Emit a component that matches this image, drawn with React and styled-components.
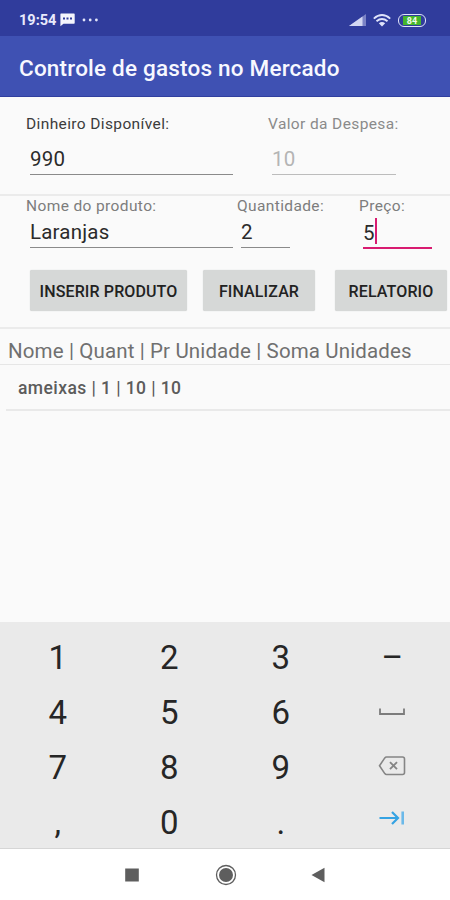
import styled, { createGlobalStyle } from "styled-components";
import React from "react";

const keys = ["1", "2", "3", "–", "4", "5", "6", "space", "7", "8", "9", "delete", ",", "0", ".", "next"];

export default function App() {
  return (
    <Screen>
      <GlobalStyle />
      <StatusBar>
        <Clock>19:54</Clock>
        <MessageIcon />
        <DotsIcon />
        <StatusRight>
          <SignalIcon />
          <WifiIcon />
          <BatteryIcon />
        </StatusRight>
      </StatusBar>
      <AppBar>
        <Title>Controle de gastos no Mercado</Title>
      </AppBar>
      <Balance>
        <Field $width={207}>
          <Label $color="#3c3c3c">Dinheiro Disponível:</Label>
          <Value $gap={19}>990</Value>
        </Field>
        <Field $width={128} $left={35}>
          <Label $color="#8a8a8a">Valor da Despesa:</Label>
          <Value $gap={19} $color="#b4b4b4" $line="#bcbcbc">10</Value>
        </Field>
      </Balance>
      <Product>
        <Field $width={207}>
          <Label>Nome do produto:</Label>
          <Value $gap={10}>Laranjas</Value>
        </Field>
        <Field $width={53} $left={4}>
          <Label>Quantidade:</Label>
          <Value $gap={10}>2</Value>
        </Field>
        <Field $width={73} $left={69}>
          <Label>Preço:</Label>
          <Value $gap={10} $focus>
            5<Caret />
          </Value>
        </Field>
      </Product>
      <Actions>
        <Button $width={157}>INSERIR PRODUTO</Button>
        <Button $width={112} $left={16}>FINALIZAR</Button>
        <Button $width={112} $left={20}>RELATORIO</Button>
      </Actions>
      <ListHeader>Nome | Quant | Pr Unidade | Soma Unidades</ListHeader>
      <ListItem>ameixas | 1 | 10 | 10</ListItem>
      <Empty />
      <Keyboard>
        {keys.map((key) => (
          <Key key={key}>
            <KeyFace name={key} />
          </Key>
        ))}
      </Keyboard>
      <NavBar />
    </Screen>
  );
}

function KeyFace({ name }) {
  if (name === "space") {
    return (
      <svg width="26" height="9" viewBox="0 0 26 9" fill="none" stroke="#7c7c7c" strokeWidth="1.8">
        <path d="M1 0.500V6H25V0.500" />
      </svg>
    );
  }
  if (name === "delete") {
    return (
      <DeleteIcon width="28" height="20" viewBox="0 0 28 20" fill="none" stroke="#858585" strokeWidth="1.6">
        <path d="M8.500 1H24.500Q26.500 1 26.500 3V16.500Q26.500 18.500 24.500 18.500H8.500Q7.500 18.500 6.800 17.600L1.500 9.750L6.800 1.900Q7.500 1 8.500 1Z" />
        <path d="M12 6.200L19 13.200M19 6.200L12 13.200" strokeWidth="1.9" />
      </DeleteIcon>
    );
  }
  if (name === "next") {
    return (
      <NextIcon width="26" height="14" viewBox="0 0 26 14" fill="none" stroke="#35a3e3" strokeWidth="2.2">
        <path d="M0.500 7H19M13 1L19 7L13 13" />
        <path d="M23.700 0.500V13.500" strokeWidth="2.600" stroke="#6bb9e9" />
      </NextIcon>
    );
  }
  return <span>{name}</span>;
}

function MessageIcon() {
  return (
    <svg width="15" height="14" viewBox="0 0 15 14">
      <path d="M1 0.500H14Q14.700 0.500 14.700 1.200V10Q14.700 10.800 14 10.800H3.500L0.400 13.300V1.200Q0.400 0.500 1 0.500Z" fill="#f4f5fd" />
      <path d="M3 4.500h2v2H3zM6.500 4.500h2v2h-2zM10 4.500h2v2h-2z" fill="#303c9c" />
    </svg>
  );
}

function DotsIcon() {
  return (
    <Dots width="17" height="4" viewBox="0 0 17 4" fill="#e2e5fa">
      <circle cx="2" cy="2" r="1.400" />
      <circle cx="8.200" cy="2" r="1.400" />
      <circle cx="14.400" cy="2" r="1.400" />
    </Dots>
  );
}

function SignalIcon() {
  return (
    <svg width="17" height="12" viewBox="0 0 17 12">
      <path d="M0 12L17 0V12Z" fill="#7b83c6" />
      <path d="M0 12L13.500 2.500V12Z" fill="#d3d7f2" />
    </svg>
  );
}

function WifiIcon() {
  return (
    <svg width="18" height="13" viewBox="0 0 18 13" fill="none" stroke="#dfe3fa" strokeWidth="1.900">
      <path d="M0.800 4.600Q9 -2.400 17.200 4.600" />
      <path d="M3.500 7.300Q9 2.800 14.500 7.300" />
      <path d="M5.800 9.300Q9 6.900 12.200 9.300L9 12.500Z" fill="#dfe3fa" stroke="none" />
    </svg>
  );
}

function BatteryIcon() {
  return (
    <Battery>
      <span>84</span>
    </Battery>
  );
}

function NavBar() {
  return (
    <Nav>
      <svg width="14" height="14" viewBox="0 0 14 14">
        <rect x="0.200" y="0.500" width="13.600" height="13" fill="#5e5e5e" />
      </svg>
      <svg width="22" height="22" viewBox="0 0 22 22">
        <circle cx="11" cy="11" r="9.500" fill="none" stroke="#5e5e5e" strokeWidth="1.300" />
        <circle cx="11" cy="11" r="7" fill="#5e5e5e" />
      </svg>
      <svg width="14" height="16" viewBox="0 0 14 16">
        <path d="M0.500 8L13.500 0.700V15.300Z" fill="#5e5e5e" />
      </svg>
    </Nav>
  );
}

const GlobalStyle = createGlobalStyle`
  * {
    box-sizing: border-box;
  }
  body {
    margin: 0;
    font-family: Roboto, "Liberation Sans", sans-serif;
  }
  svg {
    display: block;
    flex-shrink: 0;
  }
`;

const Screen = styled.div`
  width: 450px;
  height: 900px;
  display: flex;
  flex-direction: column;
  background: #fafafa;
  overflow: hidden;
`;

const StatusBar = styled.div`
  height: 36px;
  flex-shrink: 0;
  display: flex;
  align-items: center;
  padding: 4px 24px 0 19px;
  background: #303c9c;
`;

const Clock = styled.span`
  width: 41px;
  padding-top: 1px;
  color: #e8eafc;
  font-size: 14.5px;
  font-weight: 700;
  line-height: 17px;
`;

const Dots = styled.svg`
  margin-left: 7px;
`;

const StatusRight = styled.div`
  margin-left: auto;
  display: flex;
  align-items: center;
  gap: 7px;
`;

const Battery = styled.div`
  width: 28px;
  height: 13px;
  padding: 1px 4px;
  border: 1.5px solid #dfe3fa;
  border-radius: 6px;
  & span {
    display: block;
    height: 9px;
    background: #45b52c;
    color: #effbe9;
    font-size: 9px;
    font-weight: 700;
    line-height: 10px;
    text-align: center;
  }
`;

const AppBar = styled.div`
  height: 61px;
  flex-shrink: 0;
  display: flex;
  align-items: center;
  padding: 4px 19px 0;
  background: #3f51b3;
  border-bottom: 1px solid #303f9f;
`;

const Title = styled.h1`
  margin: 0;
  color: #f7f8ff;
  font-size: 22.5px;
  font-weight: 500;
  letter-spacing: 0.2px;
  white-space: nowrap;
`;

const Balance = styled.div`
  height: 99px;
  flex-shrink: 0;
  display: flex;
  padding: 18px 0 0 26px;
  border-bottom: 2px solid #ebebeb;
`;

const Product = styled.div`
  height: 74px;
  flex-shrink: 0;
  display: flex;
  padding: 1px 0 0 26px;
`;

const Field = styled.div`
  width: ${(props) => props.$width}px;
  margin-left: ${(props) => props.$left || 0}px;
  flex-shrink: 0;
`;

const Label = styled.div`
  color: ${(props) => props.$color || "#7d7d7d"};
  font-size: 15.5px;
  line-height: 18px;
  letter-spacing: 0.38px;
  white-space: nowrap;
`;

const Value = styled.div`
  display: flex;
  align-items: center;
  height: ${(props) => (props.$focus ? 24 : 23) + props.$gap}px;
  margin-left: 4px;
  padding-top: ${(props) => props.$gap - 5}px;
  padding-bottom: ${(props) => (props.$focus ? 2 : 3)}px;
  color: ${(props) => props.$color || "#2b2b2b"};
  font-size: 20.5px;
  line-height: 24px;
  letter-spacing: 0.2px;
  border-bottom: ${(props) =>
    props.$focus ? "2px solid #d81b70" : `1px solid ${props.$line || "#8a8a8a"}`};
`;

const Caret = styled.span`
  width: 2px;
  height: 26px;
  margin-top: -3px;
  background: #d81b70;
`;

const Actions = styled.div`
  height: 59px;
  flex-shrink: 0;
  display: flex;
  padding-left: 30px;
  border-bottom: 2px solid #ebebeb;
`;

const Button = styled.button`
  width: ${(props) => props.$width}px;
  height: 41px;
  flex-shrink: 0;
  margin-left: ${(props) => props.$left || 0}px;
  padding: 1px 0 0;
  border: 0;
  border-radius: 2px;
  background: #d6d8d7;
  box-shadow: 0 0 1px #c4c6c5;
  color: #222;
  font-family: inherit;
  font-size: 16px;
  font-weight: 500;
  letter-spacing: 0.12px;
  white-space: nowrap;
`;

const ListHeader = styled.div`
  height: 36px;
  flex-shrink: 0;
  padding: 10px 0 0 8px;
  color: #707070;
  font-size: 20.5px;
  line-height: 24px;
  letter-spacing: 0.13px;
  white-space: nowrap;
  border-bottom: 1px solid #e6e6e6;
`;

const ListItem = styled.div`
  height: 46px;
  flex-shrink: 0;
  margin-left: 6px;
  padding: 12px 0 0 12px;
  color: #5c5c5c;
  font-size: 17.5px;
  font-weight: 500;
  line-height: 22px;
  letter-spacing: 0.42px;
  border-bottom: 2px solid #e9e9e9;
`;

const Empty = styled.div`
  flex: 1;
`;

const Keyboard = styled.div`
  height: 227px;
  flex-shrink: 0;
  display: grid;
  grid-template-columns: repeat(4, 111.5px);
  grid-template-rows: repeat(4, 55px);
  padding: 8px 0 0 2px;
  background: #eaeaea;
  border-bottom: 1px solid #d6d6d6;
`;

const Key = styled.div`
  display: flex;
  align-items: center;
  justify-content: center;
  color: #262626;
  font-size: 33px;
  line-height: 39px;
`;

const DeleteIcon = styled.svg`
  margin-bottom: 3px;
`;

const NextIcon = styled.svg`
  margin-bottom: 10px;
`;

const Nav = styled.div`
  height: 51px;
  flex-shrink: 0;
  display: flex;
  align-items: center;
  padding-left: 125px;
  background: #fff;
  & svg + svg {
    margin-left: 76px;
  }
  & svg:last-child {
    margin-left: 74px;
  }
`;
